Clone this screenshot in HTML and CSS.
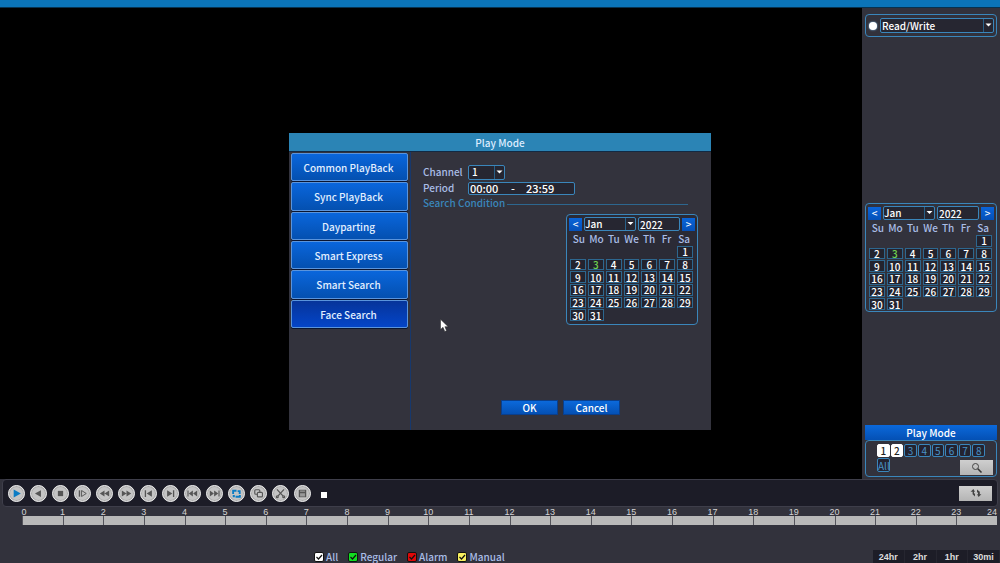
FILE: index.html
```html
<!DOCTYPE html>
<html lang="en">
<head>
<meta charset="utf-8">
<title>Playback</title>
<link rel="stylesheet" href="styles.css">
</head>
<body>
<div class="app">
  <header class="topbar"></header>
  <div class="stage">
    <main class="video"></main>
    <aside class="side">
      <div class="panel source">
        <input class="dot" type="radio" checked aria-label="Use this source">
        <select class="field" aria-label="Source"><option>Read/Write</option></select>
      </div>
      <section class="panel calendar side-calendar" aria-label="Playback date">
        <div class="cal-head">
          <button class="step" aria-label="Previous month">&lt;</button>
          <select class="field month" aria-label="Month"><option>Jan</option></select>
          <input class="field year" aria-label="Year" value="2022">
          <button class="step" aria-label="Next month">&gt;</button>
        </div>
        <div class="week"></div>
        <div class="days"></div>
      </section>
      <div class="mode">
        <button class="blue mode-title">Play Mode</button>
        <div class="panel channels">
          <div class="chips">
            <button class="chip on">1</button><button class="chip on">2</button><button class="chip">3</button><button class="chip">4</button><button class="chip">5</button><button class="chip">6</button><button class="chip">7</button><button class="chip">8</button>
          </div>
          <div class="chips-row">
            <button class="chip every">All</button>
            <button class="gray" aria-label="Search"><svg width="12" height="12" viewBox="0 0 12 12"><circle cx="4.5" cy="4.5" r="3" fill="none" stroke="#444" stroke-width="1"/><path d="M6.8 6.8L10.5 10.5" stroke="#333" stroke-width="1.6"/></svg></button>
          </div>
        </div>
      </div>
    </aside>
  </div>
  <footer class="bottom">
    <div class="toolbar">
      <button class="round lit" aria-label="Play"><svg viewBox="0 0 16 16"><path d="M5 3.8L12.6 8L5 12.2z"/></svg></button>
      <button class="round" aria-label="Reverse play"><svg viewBox="0 0 16 16"><path d="M10.6 4.4V11.6L4.2 8z"/></svg></button>
      <button class="round" aria-label="Stop"><svg viewBox="0 0 16 16"><path d="M5.2 5.2h5.6v5.6H5.2z"/></svg></button>
      <button class="round" aria-label="Slow play"><svg viewBox="0 0 16 16"><path d="M4 4.6h1.5v6.8H4z"/><path d="M7 4.8L12 8L7 11.2z" fill="none" stroke="currentColor"/></svg></button>
      <button class="round" aria-label="Rewind"><svg viewBox="0 0 16 16"><path d="M8 4.8v6.4L3 8zM13 4.8v6.4L8 8z"/></svg></button>
      <button class="round" aria-label="Fast forward"><svg viewBox="0 0 16 16"><path d="M3 4.8v6.4L8 8zM8 4.8v6.4L13 8z"/></svg></button>
      <button class="round" aria-label="Previous frame"><svg viewBox="0 0 16 16"><path d="M4 4.4h1.4v7.2H4zM11.6 4.6v6.8L6 8z"/></svg></button>
      <button class="round" aria-label="Next frame"><svg viewBox="0 0 16 16"><path d="M10.6 4.4H12v7.2h-1.4zM4.4 4.6v6.8L10 8z"/></svg></button>
      <button class="round" aria-label="Previous file"><svg viewBox="0 0 16 16"><path d="M2.6 4.8h1.2v6.4H2.6zM8.4 4.8v6.4L4 8zM13 4.8v6.4L8.6 8z"/></svg></button>
      <button class="round" aria-label="Next file"><svg viewBox="0 0 16 16"><path d="M12.2 4.8h1.2v6.4h-1.2zM3 4.8v6.4L7.4 8zM7.6 4.8v6.4L12 8z"/></svg></button>
      <button class="round lit" aria-label="Repeat"><svg viewBox="0 0 16 16"><path d="M3.4 8.4V4H8v2H5.4v2.4zM9.2 4.4h3.2v4h-2V6.4H9.2zM12.6 9.6v2.8H7v-2h3.6v-.8zM4 9.600h2.200v2.400H4z"/></svg></button>
      <button class="round" aria-label="Copy"><svg viewBox="0 0 16 16"><g fill="none" stroke="currentColor" stroke-width="1.2"><rect x="4" y="4" width="5.4" height="4.8" rx="1"/><rect x="6.8" y="6.8" width="5.4" height="4.8" rx="1" fill="#c9c9c9"/></g></svg></button>
      <button class="round" aria-label="Clip"><svg viewBox="0 0 16 16"><g fill="none" stroke="currentColor" stroke-width="1.3"><path d="M4.2 3.6L10.6 10.6M11.8 3.6L5.4 10.6"/><circle cx="4.6" cy="11.4" r="1"/><circle cx="11.4" cy="11.4" r="1"/></g></svg></button>
      <button class="round" aria-label="Save"><svg viewBox="0 0 16 16"><path d="M4 4h8v8H4z"/><path d="M5.4 4.8h5.2v1.2H5.4zM5.4 7.6h5.2v3.6H5.4z" fill="#999"/></svg></button>
      <span class="mark"></span>
      <button class="gray swap" aria-label="Switch view"><svg width="14" height="10" viewBox="0 0 14 10"><path d="M4.4 1L1.6 3.8h2v2.4L6 8.6V6L5 5V3.8h1zM9.6 9l2.8-2.8h-1.6V3.8L8 1.4V4l1 1v1.2H8z" fill="#444"/></svg></button>
    </div>
    <div class="ruler"></div>
    <div class="options">
      <div class="legend">
        <label><input type="checkbox" checked class="tick all">All</label>
        <label><input type="checkbox" checked class="tick regular">Regular</label>
        <label><input type="checkbox" checked class="tick alarm">Alarm</label>
        <label><input type="checkbox" checked class="tick manual">Manual</label>
      </div>
      <div class="spans">
        <button>24hr</button><button>2hr</button><button>1hr</button><button>30mi</button>
      </div>
    </div>
  </footer>
</div>

<div class="overlay">
  <section class="dialog" role="dialog" aria-labelledby="dlg-title">
    <h1 class="dialog-title" id="dlg-title">Play Mode</h1>
    <div class="dialog-body">
      <nav class="tabs">
        <div class="tab-list">
          <button class="tab">Common PlayBack</button>
          <button class="tab">Sync PlayBack</button>
          <button class="tab">Dayparting</button>
          <button class="tab">Smart Express</button>
          <button class="tab">Smart Search</button>
          <button class="tab current">Face Search</button>
        </div>
      </nav>
      <div class="form">
        <div class="row"><label for="channel">Channel</label><select id="channel" class="field channel"><option>1</option></select></div>
        <div class="row"><label for="from">Period</label>
          <div class="field period"><input id="from" value="00:00"><span>-</span><input aria-label="Period end" value="23:59"></div>
        </div>
        <h2 class="legend-line">Search Condition</h2>
        <section class="panel calendar" aria-label="Search date">
          <div class="cal-head">
            <button class="step" aria-label="Previous month">&lt;</button>
            <select class="field month" aria-label="Month"><option>Jan</option></select>
            <input class="field year" aria-label="Year" value="2022">
            <button class="step" aria-label="Next month">&gt;</button>
          </div>
          <div class="week"></div>
          <div class="days"></div>
        </section>
        <div class="actions">
          <button class="blue">OK</button>
          <button class="blue">Cancel</button>
        </div>
      </div>
    </div>
  </section>
</div>
<svg class="cursor" width="9" height="15" viewBox="0 0 9 14"><path d="M.5.8V11L3 8.8L4.8 13L6.6 12.2L4.9 8.2H8.2z" fill="#fff" stroke="#222" stroke-width=".5"/></svg>
<script src="script.js"></script>
</body>
</html>
```
FILE: styles.css
```css
* { box-sizing: border-box; }
body {
  margin: 0;
  background: #000;
  color: #fff;
  font-family: "Noto Sans CJK SC", "Noto Sans", sans-serif;
  font-size: 10px;
  line-height: 12px;
  overflow: hidden;
}
button, input, select {
  font: inherit;
  color: inherit;
  margin: 0;
  padding: 0;
  border: 0;
  background: none;
  border-radius: 0;
  appearance: none;
  min-width: 0;
}
h1, h2 { margin: 0; font-size: 10px; font-weight: 500; }

.app { display: flex; flex-direction: column; height: 100vh; }
.topbar { height: 8px; background: #0b74b8; border-bottom: 1px solid #07324f; }
.stage { flex: 1; display: flex; min-height: 0; }
.video { flex: 1; background: #000; }

.side {
  width: 138px;
  display: flex;
  flex-direction: column;
  padding: 6px 3px 2px 3px;
  background: #32323c;
}
.panel { border: 1px solid #3a86bb; border-radius: 4px; }
.field {
  border: 1px solid #3a86bb;
  border-radius: 2px;
  background-color: #262631;
  color: #fff;
  font-weight: 500;
}
select.field {
  background-image: url("data:image/svg+xml,%3Csvg xmlns='http://www.w3.org/2000/svg' width='10' height='20'%3E%3Cpath d='M.5 0V20' stroke='%23285f87'/%3E%3Cpath d='M2.5 8h6L5.5 11z' fill='%23fff'/%3E%3C/svg%3E");
  background-repeat: no-repeat;
  background-position: right center;
}
.source { display: flex; align-items: center; gap: 3px; height: 23px; padding: 0 2px 0 3px; }
.dot { width: 8px; height: 8px; border-radius: 50%; background: #fff; box-shadow: 0 0 2px #8cf; }
.source .field { flex: 1; height: 15px; padding-left: 1px; }

.calendar { width: 132px; padding: 2px 2px 3px; background: #2b2b36; }
.side-calendar { margin-top: 166px; padding-bottom: 1px; background: #32323c; }
.cal-head { display: flex; align-items: center; gap: 2px; }
.step { width: 13px; height: 13px; background: linear-gradient(#0a64d8, #0450b8); color: #fff; line-height: 12px; font-weight: 500; }
.month { flex: 1; height: 14px; }
.year { width: 42px; height: 14px; padding-left: 1px; }
.week, .days { display: grid; grid-template-columns: repeat(7, 1fr); padding: 0 2px 0 1px; text-align: center; }
.week { height: 15px; line-height: 15px; color: #a9bde6; font-weight: 500; }
.days { height: 75px; grid-template-rows: repeat(6, 1fr); gap: 1px 2px; }
.day { border: 1px solid #2d678f; background: #23232e; color: #fff; line-height: 9px; font-weight: 500; }
.day.marked { color: #6fd04e; }
.day.first { grid-column-start: 7; }

.mode { margin-top: auto; }
.blue { background: linear-gradient(#0b69db, #0450b4); color: #fff; font-weight: 500; line-height: 13px; }
.mode-title { display: block; width: 100%; height: 15px; }
.channels { height: 37px; padding: 3px 3px 0 11px; }
.chips { display: grid; grid-template-columns: repeat(8, 1fr); gap: 1px; width: 108px; }
.chip { height: 13px; border: 1px solid #3a86bb; border-radius: 2px; color: #4a92c4; background: #232330; line-height: 11px; }
.chip.on { background: #fff; border-color: #fff; color: #222; font-weight: 500; }
.every { width: 13px; height: 14px; }
.chips-row { display: flex; justify-content: space-between; align-items: flex-start; padding-top: 1px; }
.gray { display: flex; align-items: center; justify-content: center; width: 33px; height: 15px; background: linear-gradient(#cfcfcf, #b4b4b4); }
.chips-row .gray { margin-top: 2px; }

.bottom { height: 84px; display: flex; flex-direction: column; background: #32323c; }
.toolbar {
  display: flex;
  align-items: center;
  gap: 5px;
  height: 28px;
  margin: 0 2px;
  padding: 0 5px 0 5px;
  background: #1c1c27;
  border: 1px solid #3e3e4a;
  border-radius: 4px;
}
.round {
  display: flex;
  align-items: center;
  justify-content: center;
  width: 17px;
  height: 17px;
  border: 1px solid #eee;
  border-radius: 50%;
  background: #c4c4c4;
  box-shadow: inset 0 0 0 1px #aaa;
  color: #555;
}
.round svg { flex: none; width: 15px; height: 15px; fill: currentColor; }
.round.lit { color: #0b7cc4; }
.mark { width: 6px; height: 6px; margin: 3px 0 0 5px; background: #fff; }
.swap { margin-left: auto; }

.ruler { display: grid; grid-template-columns: repeat(24, 1fr); margin: 0 3px 0 22px; padding-top: 1px; font: 9px/8px "Liberation Sans", Arial, sans-serif; color: #d4d4d4; }
.hour { min-width: 0; }
.hour-text { display: flex; height: 8px; }
.hour-text span { flex: none; width: 20px; margin-left: -10px; text-align: center; }
.hour:first-child .hour-text span { margin-left: -8px; }
.hour-text span + span { margin-left: auto; width: auto; }
.bar { height: 9px; background: #b9b9b9; border-left: 1px solid #55555c; }

.options { flex: 1; display: flex; align-items: flex-end; justify-content: space-between; padding-left: 314px; }
.legend { display: flex; gap: 10px; color: #a9bde6; font-weight: 500; }
.legend label { display: flex; align-items: center; gap: 2px; }
.tick {
  width: 10px;
  height: 10px;
  border: 1px solid #111;
  border-radius: 2px;
  background: #fff url("data:image/svg+xml,%3Csvg xmlns='http://www.w3.org/2000/svg' width='8' height='8'%3E%3Cpath d='M1.5 4L3.5 6L7 2' fill='none' stroke='%23111' stroke-width='1.2'/%3E%3C/svg%3E") center no-repeat;
}
.regular { background-color: #12dd20; }
.alarm { background-color: #e00808; }
.manual { background-color: #f8f060; }
.spans { display: grid; grid-template-columns: repeat(4, 1fr); width: 127px; height: 13px; background: #1d1d27; font: bold 9px/12px "Liberation Sans", Arial, sans-serif; }
.spans button { border-right: 1px solid #262630; color: #ddd; }

.overlay { position: fixed; inset: 0; display: grid; place-items: center; }
.dialog { width: 422px; background: #33333d; color: #a9bde6; }
.dialog-title { height: 18px; line-height: 20px; text-align: center; background: #2b84b5; color: #dcecff; }
.dialog-body { display: flex; min-height: 279px; border-top: 1px solid #122a44; }
.tabs { width: 122px; padding: 1px 2px 0 2px; border-right: 1px solid #17386c; }
.tab-list { display: flex; flex-direction: column; gap: 1px; height: 175px; }
.tab {
  flex: 1;
  padding: 2px 2px 0 0;
  border: 1px solid #5a94dc;
  border-radius: 2px;
  background: linear-gradient(#0a66dc, #0450b0);
  box-shadow: 0 1px 0 #0a1530;
  color: #e2efff;
  font-weight: 500;
}
.tab.current { background: linear-gradient(#06349a, #0445c8); }
.form { flex: 1; display: flex; flex-direction: column; padding: 12px 13px 15px 12px; }
.row { display: flex; align-items: center; height: 16px; font-weight: 500; }
.row label { width: 45px; }
.channel { width: 37px; height: 15px; padding-left: 3px; }
.period { display: flex; width: 107px; height: 13px; font-size: 11px; padding-left: 1px; }
.period input { width: 41px; height: 11px; }
.period span { width: 15px; line-height: 11px; }
.legend-line { display: flex; align-items: center; margin-right: 10px; color: #3a86bb; line-height: 13px; }
.legend-line::after { content: ""; flex: 1; height: 1px; margin: 4px 0 0 2px; background: #2d678f; }
.form .calendar { align-self: flex-end; margin-top: 5px; }
.actions { display: flex; gap: 5px; margin: auto 0 0 78px; }
.actions .blue { width: 57px; height: 15px; border: 1px solid #0a3f8c; }

.cursor { position: absolute; left: 44%; top: 56.5%; pointer-events: none; }
```
FILE: script.js
```js
const weekdays = ["Su", "Mo", "Tu", "We", "Th", "Fr", "Sa"];

document.querySelectorAll(".week").forEach((row) => {
  row.innerHTML = weekdays.map((name) => `<span>${name}</span>`).join("");
});

document.querySelectorAll(".days").forEach((grid) => {
  for (let day = 1; day <= 31; day++) {
    const cell = document.createElement("button");
    cell.className = "day";
    if (day === 1) cell.classList.add("first");
    if (day === 3) cell.classList.add("marked");
    cell.textContent = day;
    grid.append(cell);
  }
});

const ruler = document.querySelector(".ruler");
for (let hour = 0; hour < 24; hour++) {
  const last = hour === 23 ? "<span>24</span>" : "";
  ruler.insertAdjacentHTML("beforeend",
    `<div class="hour"><div class="hour-text"><span>${hour}</span>${last}</div><div class="bar"></div></div>`);
}
```
